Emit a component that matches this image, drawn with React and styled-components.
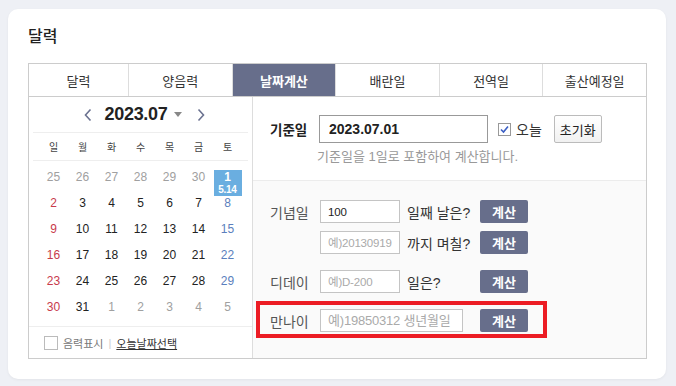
import styled, { createGlobalStyle } from "styled-components";

const FONT = `"Liberation Sans", "Noto Sans CJK KR", sans-serif`;

const GlobalStyle = createGlobalStyle`
  html, body {
    margin: 0;
    padding: 0;
    background: #eef0f5;
    font-family: ${FONT};
    color: #333;
  }
  * { box-sizing: border-box; }
`;

const TABS = ["달력", "양음력", "날짜계산", "배란일", "전역일", "출산예정일"];
const WEEK = ["일", "월", "화", "수", "목", "금", "토"];

// [day, inMonth]
const WEEKS = [
  [[25, 0], [26, 0], [27, 0], [28, 0], [29, 0], [30, 0], [1, 1]],
  [[2, 1], [3, 1], [4, 1], [5, 1], [6, 1], [7, 1], [8, 1]],
  [[9, 1], [10, 1], [11, 1], [12, 1], [13, 1], [14, 1], [15, 1]],
  [[16, 1], [17, 1], [18, 1], [19, 1], [20, 1], [21, 1], [22, 1]],
  [[23, 1], [24, 1], [25, 1], [26, 1], [27, 1], [28, 1], [29, 1]],
  [[30, 1], [31, 1], [1, 0], [2, 0], [3, 0], [4, 0], [5, 0]],
];

function App() {
  return (
    <>
      <GlobalStyle />
      <Page>
        <Card>
          <Title>달력</Title>
          <TabBar>
            {TABS.map((t) => (
              <Tab key={t} $active={t === "날짜계산"}>
                {t}
              </Tab>
            ))}
          </TabBar>
          <Body>
            <CalendarPanel>
              <MonthHeader>
                <Arrow viewBox="0 0 8 14">
                  <polyline points="6.5,1.5 1.5,7 6.5,12.5" />
                </Arrow>
                <MonthTitle>2023.07</MonthTitle>
                <Caret />
                <Arrow viewBox="0 0 8 14" $right>
                  <polyline points="1.5,1.5 6.5,7 1.5,12.5" />
                </Arrow>
              </MonthHeader>
              <WeekRow>
                {WEEK.map((w) => (
                  <WeekDay key={w}>{w}</WeekDay>
                ))}
              </WeekRow>
              <DateGrid>
                {WEEKS.flatMap((week, wi) =>
                  week.map(([d, inMonth], di) => {
                    const tone = !inMonth
                      ? "muted"
                      : di === 0
                      ? "sun"
                      : di === 6
                      ? "sat"
                      : "normal";
                    const selected = wi === 0 && di === 6;
                    return (
                      <DateCell key={`${wi}-${di}`}>
                        {selected ? (
                          <Selected>
                            <SelectedDay>{d}</SelectedDay>
                            <Lunar>5.14</Lunar>
                          </Selected>
                        ) : (
                          <DayNum $tone={tone}>{d}</DayNum>
                        )}
                      </DateCell>
                    );
                  })
                )}
              </DateGrid>
              <CalFooter>
                <SmallBox />
                <FooterText>음력표시</FooterText>
                <FooterSep>|</FooterSep>
                <FooterLink>오늘날짜선택</FooterLink>
              </CalFooter>
            </CalendarPanel>

            <RightPanel>
              <BaseSection>
                <BaseRow>
                  <BaseLabel>기준일</BaseLabel>
                  <BaseInput readOnly value="2023.07.01" />
                  <CheckBox>
                    <svg width="11" height="11" viewBox="0 0 11 11">
                      <polyline
                        points="2,5.5 4.5,8 9,2.5"
                        fill="none"
                        stroke="#3b5fc4"
                        strokeWidth="1.6"
                      />
                    </svg>
                  </CheckBox>
                  <TodayText>오늘</TodayText>
                  <ResetButton>초기화</ResetButton>
                </BaseRow>
                <Hint>기준일을 1일로 포함하여 계산합니다.</Hint>
              </BaseSection>

              <CalcSection>
                <CalcRow>
                  <CalcLabel>기념일</CalcLabel>
                  <Field $w={80} readOnly value="100" />
                  <Suffix>일째 날은?</Suffix>
                  <CalcButton>계산</CalcButton>
                </CalcRow>
                <CalcRow $gap={8}>
                  <CalcLabel />
                  <Field $w={80} placeholder="예)20130919" />
                  <Suffix>까지 며칠?</Suffix>
                  <CalcButton>계산</CalcButton>
                </CalcRow>
                <CalcRow $gap={16}>
                  <CalcLabel>디데이</CalcLabel>
                  <Field $w={80} placeholder="예)D-200" />
                  <Suffix>일은?</Suffix>
                  <CalcButton>계산</CalcButton>
                </CalcRow>
                <CalcRow $gap={16} $marked>
                  <CalcLabel>만나이</CalcLabel>
                  <Field $w={143} $fs={13} placeholder="예)19850312 생년월일" />
                  <Spacer />
                  <CalcButton>계산</CalcButton>
                </CalcRow>
              </CalcSection>
            </RightPanel>
          </Body>
        </Card>
      </Page>
    </>
  );
}

export default App;

const Page = styled.div`
  padding: 9px 10px 8px 8px;
  width: 676px;
  height: 386px;
`;

const Card = styled.div`
  background: #fff;
  border-radius: 10px;
  padding: 18px 19px 20px 20px;
  box-shadow: 0 1px 3px rgba(0, 0, 0, 0.05);
`;

const Title = styled.h2`
  margin: 0 0 16px;
  font-size: 16px;
  line-height: 20px;
  font-weight: 500;
  color: #222;
`;

const TabBar = styled.div`
  display: grid;
  grid-template-columns: 99px repeat(5, minmax(0, 1fr));
  border: 1px solid #ccc;
  height: 34px;
`;

const Tab = styled.div`
  display: flex;
  align-items: center;
  justify-content: center;
  font-size: 13px;
  color: ${({ $active }) => ($active ? "#fff" : "#333")};
  font-weight: ${({ $active }) => ($active ? 700 : 400)};
  background: ${({ $active }) => ($active ? "#676e8b" : "#fff")};
  border-left: 1px solid #ddd;
  &:first-child {
    border-left: none;
  }
`;

const Body = styled.div`
  display: flex;
  border: 1px solid #ccc;
  border-top: none;
  height: 262px;
`;

const CalendarPanel = styled.div`
  width: 224px;
  border-right: 1px solid #ddd;
  display: flex;
  flex-direction: column;
`;

const MonthHeader = styled.div`
  height: 36px;
  margin: 0 4px;
  border-bottom: 1px solid #eee;
  display: flex;
  align-items: center;
  justify-content: center;
  padding-left: 8px;
`;

const Arrow = styled.svg`
  width: 8px;
  height: 14px;
  margin: ${({ $right }) => ($right ? "0 0 0 15px" : "0 13px 0 0")};
  polyline {
    fill: none;
    stroke: #6b7290;
    stroke-width: 1.6;
  }
`;

const MonthTitle = styled.span`
  font-size: 18px;
  font-weight: 700;
  color: #222;
  letter-spacing: -0.3px;
`;

const Caret = styled.span`
  margin-left: 7px;
  width: 0;
  height: 0;
  border-left: 4px solid transparent;
  border-right: 4px solid transparent;
  border-top: 5px solid #888;
`;

const WeekRow = styled.div`
  height: 28px;
  margin: 0 4px;
  border-bottom: 1px solid #eee;
  display: grid;
  grid-template-columns: repeat(7, 29px);
  justify-content: center;
  align-items: center;
`;

const WeekDay = styled.span`
  text-align: center;
  font-size: 10px;
  color: #444;
`;

const DateGrid = styled.div`
  margin-top: 3px;
  display: grid;
  grid-template-columns: repeat(7, 29px);
  grid-auto-rows: 26px;
  justify-content: center;
`;

const DateCell = styled.div`
  display: flex;
  justify-content: center;
  align-items: flex-start;
  padding-top: 6px;
`;

const toneColor = {
  muted: "#a0a0a0",
  sun: "#c83a4b",
  sat: "#5b7fbd",
  normal: "#222",
};

const DayNum = styled.span`
  font-size: 12px;
  line-height: 14px;
  color: ${({ $tone }) => toneColor[$tone]};
`;

const Selected = styled.div`
  position: relative;
  z-index: 1;
  width: 28px;
  height: 26px;
  background: #6aaee0;
  display: flex;
  flex-direction: column;
  align-items: center;
  color: #fff;
`;

const SelectedDay = styled.span`
  font-size: 12px;
  line-height: 14px;
  font-weight: 700;
`;

const Lunar = styled.span`
  font-size: 10px;
  line-height: 11px;
  font-weight: 700;
  letter-spacing: -0.3px;
`;

const CalFooter = styled.div`
  margin-top: 6px;
  border-top: 1px solid #eee;
  flex: 1;
  display: flex;
  align-items: center;
  padding-left: 15px;
  font-size: 11px;
`;

const SmallBox = styled.span`
  width: 14px;
  height: 14px;
  border: 1px solid #bbb;
  background: #fff;
`;

const FooterText = styled.span`
  margin-left: 5px;
  color: #777;
`;

const FooterSep = styled.span`
  margin: 0 5px;
  color: #ccc;
`;

const FooterLink = styled.span`
  color: #333;
  text-decoration: underline;
`;

const RightPanel = styled.div`
  flex: 1;
  display: flex;
  flex-direction: column;
`;

const BaseSection = styled.div`
  background: #fff;
  padding: 18px 0 15px 17px;
  border-bottom: 1px solid #ececec;
`;

const BaseRow = styled.div`
  display: flex;
  align-items: center;
  height: 28px;
`;

const BaseLabel = styled.span`
  width: 49px;
  font-size: 13.5px;
  font-weight: 700;
  color: #222;
`;

const BaseInput = styled.input`
  width: 169px;
  height: 28px;
  border: 1px solid #999;
  padding: 0 9px;
  font-family: ${FONT};
  font-size: 14px;
  font-weight: 700;
  color: #222;
  outline: none;
`;

const CheckBox = styled.span`
  margin-left: 10px;
  width: 13px;
  height: 13px;
  border: 1px solid #999;
  background: #fff;
  display: flex;
  align-items: center;
  justify-content: center;
`;

const TodayText = styled.span`
  margin-left: 5px;
  font-size: 14px;
  color: #333;
`;

const ResetButton = styled.button`
  margin-left: 12px;
  width: 48px;
  height: 28px;
  padding: 0;
  border: 1px solid #bbb;
  border-radius: 2px;
  background: linear-gradient(#fff, #f1f1f1);
  font-family: ${FONT};
  font-size: 13px;
  color: #222;
`;

const Hint = styled.p`
  margin: 6px 0 0 47px;
  font-size: 13px;
  line-height: 16px;
  color: #999;
`;

const CalcSection = styled.div`
  flex: 1;
  background: #fafafa;
  padding: 19px 0 0 17px;
`;

const CalcRow = styled.div`
  position: relative;
  display: flex;
  align-items: center;
  height: 23px;
  width: 258px;
  margin-top: ${({ $gap }) => $gap || 0}px;
  ${({ $marked }) =>
    $marked &&
    `
    &::after {
      content: "";
      position: absolute;
      left: -14px;
      right: -19px;
      top: -8px;
      bottom: -6px;
      border: 4px solid #ec1c24;
      pointer-events: none;
    }
  `}
`;

const CalcLabel = styled.span`
  width: 50px;
  font-size: 14px;
  color: #555;
`;

const Field = styled.input`
  width: ${({ $w }) => $w}px;
  height: 23px;
  border: 1px solid #c4c4c4;
  background: #fff;
  padding: 0 2px 0 7px;
  font-family: ${FONT};
  font-size: ${({ $fs }) => $fs || 11.5}px;
  letter-spacing: -0.2px;
  color: #222;
  outline: none;
  &::placeholder {
    color: #aaa;
  }
`;

const Suffix = styled.span`
  width: 80px;
  padding-left: 7px;
  font-size: 14px;
  color: #333;
  white-space: nowrap;
`;

const Spacer = styled.span`
  width: 17px;
`;

const CalcButton = styled.button`
  width: 48px;
  height: 23px;
  padding: 0;
  border: none;
  border-radius: 2px;
  background: #676e8b;
  color: #fff;
  font-family: ${FONT};
  font-size: 13px;
  font-weight: 700;
`;
